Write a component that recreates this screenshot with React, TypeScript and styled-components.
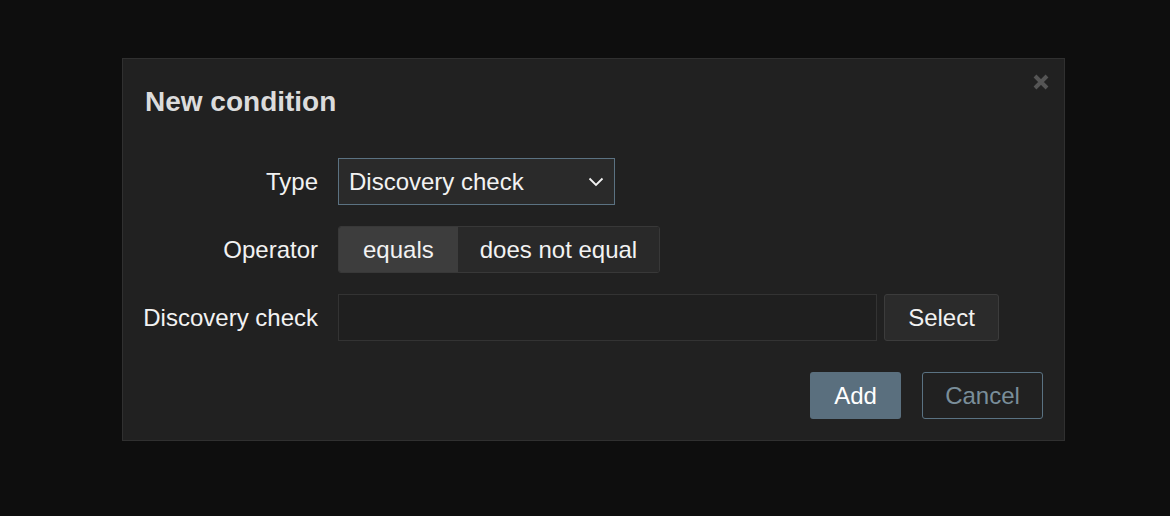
import React from "react";
import styled, { createGlobalStyle } from "styled-components";

const Global = createGlobalStyle`
  html, body { margin: 0; padding: 0; background: #0e0e0e; }
  body { font-family: Arial, "Liberation Sans", sans-serif; }
  * { box-sizing: border-box; }
`;

const Page = styled.div`
  width: 1170px;
  height: 516px;
  background: #0e0e0e;
  padding: 58px 0 0 122px;
`;

const Dialog = styled.div`
  position: relative;
  width: 943px;
  height: 383px;
  background: #212121;
  border: 1px solid #303030;
  padding: 0 21px 21px 22px;
  display: flex;
  flex-direction: column;
`;

const Title = styled.h2`
  margin: 28px 0 0;
  font-size: 28px;
  line-height: 30px;
  font-weight: bold;
  color: #dcdcdc;
`;

const Close = styled.button`
  position: absolute;
  top: 15px;
  right: 15px;
  width: 16px;
  height: 16px;
  padding: 0;
  border: 0;
  background: none;
  display: flex;
`;

const Form = styled.div`
  margin-top: 41px;
  display: grid;
  grid-template-columns: 173px auto;
  justify-content: start;
  column-gap: 20px;
  row-gap: 21px;
  align-items: center;
  justify-items: start;
`;

const Label = styled.label`
  justify-self: end;
  white-space: nowrap;
  font-size: 24px;
  color: #f2f2f2;
`;

const SelectBox = styled.div`
  width: 277px;
  height: 47px;
  background: #2a2a2a;
  border: 1px solid #5b7282;
  display: flex;
  align-items: center;
  justify-content: space-between;
  padding: 0 10px 0 10px;
  font-size: 24px;
  color: #f2f2f2;
`;

const Segmented = styled.div`
  display: flex;
  height: 47px;
  border: 1px solid #383838;
  border-radius: 3px;
  overflow: hidden;
`;

const Segment = styled.div<{ $active?: boolean }>`
  display: flex;
  align-items: center;
  padding: 0 ${(p) => (p.$active ? "24px" : "22px")};
  background: ${(p) => (p.$active ? "#3d3d3d" : "#292929")};
  font-size: 24px;
  color: #f2f2f2;
`;

const InputRow = styled.div`
  display: flex;
  gap: 7px;
`;

const TextInput = styled.div`
  width: 539px;
  height: 47px;
  background: #1f1f1f;
  border: 1px solid #333333;
`;

const GrayButton = styled.button`
  width: 115px;
  height: 47px;
  background: #2b2b2b;
  border: 1px solid #3c3c3c;
  border-radius: 3px;
  font-family: inherit;
  font-size: 24px;
  color: #f2f2f2;
`;

const Footer = styled.div`
  margin-top: auto;
  display: flex;
  justify-content: flex-end;
  gap: 21px;
`;

const PrimaryButton = styled.button`
  width: 91px;
  height: 47px;
  background: #5a6f7e;
  border: 0;
  border-radius: 3px;
  font-family: inherit;
  font-size: 24px;
  color: #ffffff;
`;

const OutlineButton = styled.button`
  width: 121px;
  height: 47px;
  background: transparent;
  border: 1px solid #5a7282;
  border-radius: 3px;
  font-family: inherit;
  font-size: 24px;
  color: #7a8e9a;
`;

export default function App() {
  return (
    <Page>
      <Global />
      <Dialog>
        <Close aria-label="Close">
          <svg width="16" height="16" viewBox="0 0 16 16">
            <path d="M2 2 L14 14 M14 2 L2 14" stroke="#555555" strokeWidth="4" strokeLinecap="butt" />
          </svg>
        </Close>
        <Title>New condition</Title>
        <Form>
          <Label>Type</Label>
          <SelectBox>
            <span>Discovery check</span>
            <svg width="16" height="10" viewBox="0 0 16 10">
              <path d="M1.5 1.5 L8 8 L14.5 1.5" stroke="#f2f2f2" strokeWidth="1.8" fill="none" />
            </svg>
          </SelectBox>
          <Label>Operator</Label>
          <Segmented>
            <Segment $active>equals</Segment>
            <Segment>does not equal</Segment>
          </Segmented>
          <Label>Discovery check</Label>
          <InputRow>
            <TextInput />
            <GrayButton>Select</GrayButton>
          </InputRow>
        </Form>
        <Footer>
          <PrimaryButton>Add</PrimaryButton>
          <OutlineButton>Cancel</OutlineButton>
        </Footer>
      </Dialog>
    </Page>
  );
}
